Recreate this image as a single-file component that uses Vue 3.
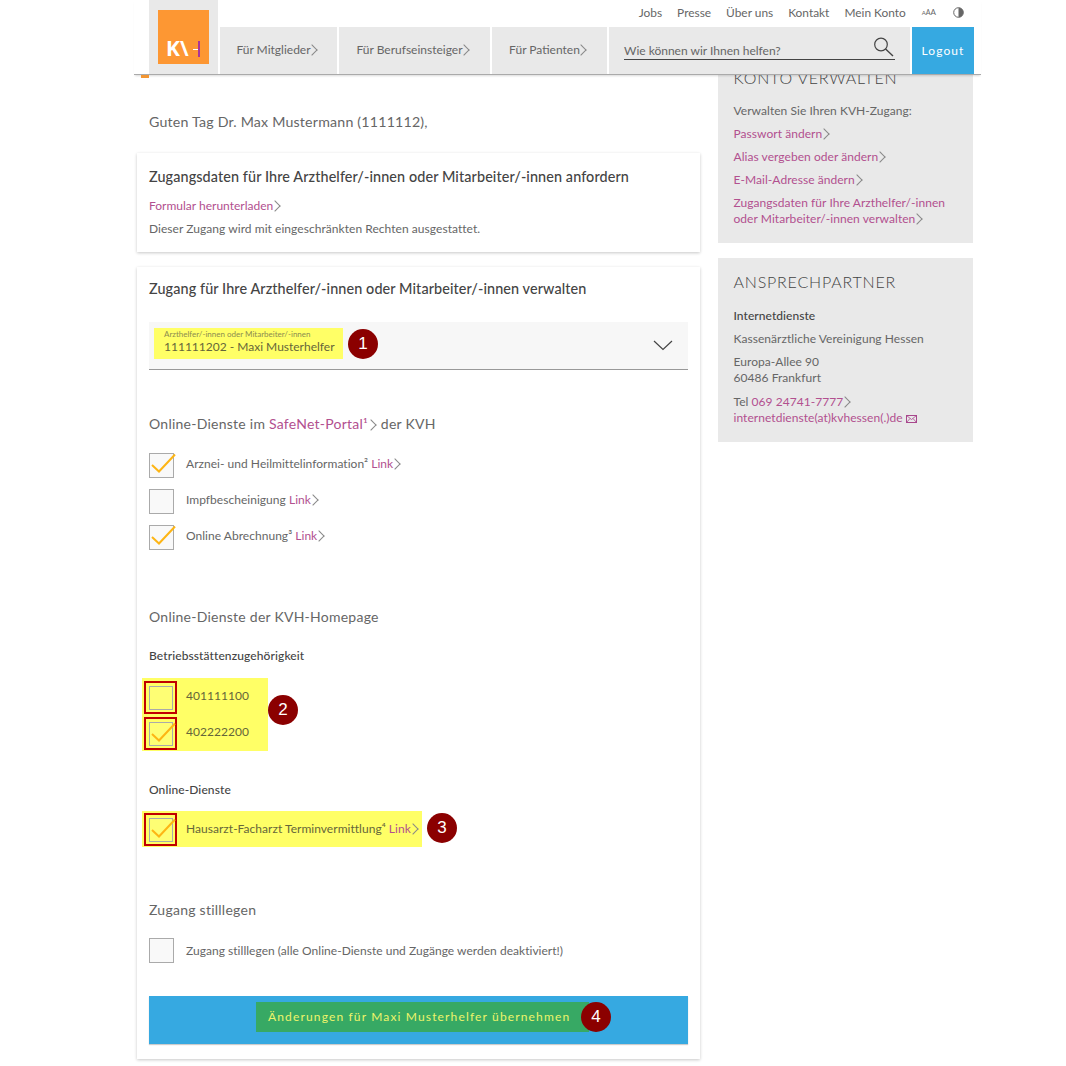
<script setup>
const nav = ['Für Mitglieder', 'Für Berufseinsteiger', 'Für Patienten']
const topLinks = ['Jobs', 'Presse', 'Über uns', 'Kontakt', 'Mein Konto']
const accountLinks = ['Passwort ändern', 'Alias vergeben oder ändern', 'E-Mail-Adresse ändern']
const safenet = [
  { label: 'Arznei- und Heilmittelinformation²', checked: true },
  { label: 'Impfbescheinigung', checked: false },
  { label: 'Online Abrechnung³', checked: true }
]
</script>

<template>
  <div class="page">
    <header class="header">
      <div class="logo-wrap">
        <div class="logo">
          <span class="logo-text">K\</span>
          <span class="logo-dash"></span>
          <span class="logo-bar"></span>
        </div>
      </div>
      <div class="header-right">
        <div class="toplinks">
          <a v-for="t in topLinks" :key="t">{{ t }}</a>
          <span class="aaa"><small>A</small><small class="m">A</small><small class="l">A</small></span>
          <svg class="contrast" width="11" height="11" viewBox="0 0 11 11"><circle cx="5.5" cy="5.5" r="4.8" fill="#fff" stroke="#666" stroke-width="1"/><path d="M5.5 .7a4.8 4.8 0 0 1 0 9.6z" fill="#666"/></svg>
        </div>
        <nav class="mainnav">
          <a v-for="n in nav" :key="n" class="navitem">{{ n }}<i class="chev"></i></a>
          <div class="search">
            <div class="search-field">
              <span>Wie können wir Ihnen helfen?</span>
              <svg width="21" height="20" viewBox="0 0 21 20"><circle cx="8" cy="7.5" r="6.3" fill="none" stroke="#444" stroke-width="1.2"/><path d="M12.6 12l7.4 7" stroke="#444" stroke-width="1.4" fill="none"/></svg>
            </div>
          </div>
          <a class="logout">Logout</a>
        </nav>
      </div>
    </header>
    <span class="marker"></span>

    <div class="columns">
      <main class="left">
        <p class="greet">Guten Tag Dr. Max Mustermann (1111112),</p>

        <section class="card card-a">
          <h2>Zugangsdaten für Ihre Arzthelfer/-innen oder Mitarbeiter/-innen anfordern</h2>
          <p class="dl"><a class="pink">Formular herunterladen<i class="chev"></i></a></p>
          <p class="small">Dieser Zugang wird mit eingeschränkten Rechten ausgestattet.</p>
        </section>

        <section class="card card-b">
          <h2>Zugang für Ihre Arzthelfer/-innen oder Mitarbeiter/-innen verwalten</h2>

          <div class="select">
            <div class="sel-hl">
              <span class="sel-label">Arzthelfer/-innen oder Mitarbeiter/-innen</span>
              <span class="sel-value">111111202 - Maxi Musterhelfer</span>
            </div>
            <span class="badge b1">1</span>
            <svg class="sel-arrow" width="20" height="11" viewBox="0 0 20 11"><path d="M1 1l9 8.5L19 1" fill="none" stroke="#444" stroke-width="1.2"/></svg>
          </div>

          <h3 class="sec sec1">Online-Dienste im <a class="pink">SafeNet-Portal¹<i class="chev big"></i></a> der KVH</h3>
          <div class="group">
            <div v-for="s in safenet" :key="s.label" class="row">
              <span class="box">
                <svg v-if="s.checked" class="tick" width="28" height="24" viewBox="0 0 28 24"><path d="M3 12l7 6.5L26 1.5" fill="none" stroke="#fdb515" stroke-width="2"/></svg>
              </span>
              <span class="lbl">{{ s.label }} <a class="pink">Link<i class="chev"></i></a></span>
            </div>
          </div>

          <h3 class="sec sec2">Online-Dienste der KVH-Homepage</h3>
          <h4 class="sub sub1">Betriebsstättenzugehörigkeit</h4>
          <div class="hl-wrap">
            <div class="hl hl-two">
              <div class="row redrow">
                <span class="red"><span class="box"></span></span>
                <span class="lbl">401111100</span>
              </div>
              <div class="row redrow">
                <span class="red"><span class="box"><svg class="tick" width="28" height="24" viewBox="0 0 28 24"><path d="M3 12l7 6.5L26 1.5" fill="none" stroke="#fdb515" stroke-width="2"/></svg></span></span>
                <span class="lbl">402222200</span>
              </div>
            </div>
            <span class="badge">2</span>
          </div>

          <h4 class="sub sub2">Online-Dienste</h4>
          <div class="hl-wrap">
            <div class="hl hl-one">
              <div class="row redrow">
                <span class="red"><span class="box"><svg class="tick" width="28" height="24" viewBox="0 0 28 24"><path d="M3 12l7 6.5L26 1.5" fill="none" stroke="#fdb515" stroke-width="2"/></svg></span></span>
                <span class="lbl">Hausarzt-Facharzt Terminvermittlung⁴ <a class="pink">Link<i class="chev"></i></a></span>
              </div>
            </div>
            <span class="badge">3</span>
          </div>

          <h3 class="sec sec3">Zugang stilllegen</h3>
          <div class="row stop">
            <span class="box"></span>
            <span class="lbl">Zugang stilllegen (alle Online-Dienste und Zugänge werden deaktiviert!)</span>
          </div>

          <div class="submit">
            <span class="submit-hl">Änderungen für Maxi Musterhelfer übernehmen</span>
            <span class="badge b4">4</span>
          </div>
        </section>
      </main>

      <aside class="right">
        <div class="panel p1">
          <h3>Konto verwalten</h3>
          <p>Verwalten Sie Ihren KVH-Zugang:</p>
          <p v-for="l in accountLinks" :key="l"><a class="pink">{{ l }}<i class="chev"></i></a></p>
          <p><a class="pink">Zugangsdaten für Ihre Arzthelfer/-innen<br>oder Mitarbeiter/-innen verwalten<i class="chev"></i></a></p>
        </div>
        <div class="panel p2">
          <h3>Ansprechpartner</h3>
          <p class="strong">Internetdienste</p>
          <p>Kassenärztliche Vereinigung Hessen</p>
          <p>Europa-Allee 90<br>60486 Frankfurt</p>
          <p class="contact">Tel <a class="pink">069 24741-7777<i class="chev"></i></a><br>
            <a class="pink">internetdienste(at)kvhessen(.)de</a>
            <svg class="mail" width="11" height="8" viewBox="0 0 11 8"><rect x=".5" y=".5" width="10" height="7" fill="none" stroke="#a8478d"/><path d="M.5.5l5 4 5-4M.5 7.5l3.500-4M10.500 7.500l-3.500-4" fill="none" stroke="#a8478d" stroke-width=".8"/></svg>
          </p>
        </div>
      </aside>
    </div>
  </div>
</template>

<style>
html, body { margin: 0; background: #fff; }
</style>

<style scoped>
.page {
  position: relative;
  width: 1066px;
  height: 1066px;
  overflow: hidden;
  background: #fff;
  font-family: "Lato", "Noto Sans", sans-serif;
  color: #666;
  font-size: 12px;
}
a { color: inherit; text-decoration: none; }
p, h2, h3, h4 { margin: 0; font-weight: 400; }
.pink { color: #b2508f; }
.chev {
  display: inline-block;
  width: 8px;
  height: 8px;
  margin: 0 2px 0 -2px;
  box-sizing: border-box;
  border-top: 1px solid #888;
  border-right: 1px solid #888;
  transform: rotate(45deg);
}
.chev.big { margin-left: -1px; }

/* header overlay */
.header {
  position: absolute;
  top: 0;
  left: 134px;
  width: 847px;
  height: 75px;
  padding-left: 15px;
  box-sizing: border-box;
  display: flex;
  background: #fff;
  border-bottom: 1px solid #aaa;
  box-shadow: 0 2px 2px -1px rgba(0, 0, 0, .15);
  z-index: 5;
}
.logo-wrap {
  width: 69px;
  height: 74px;
  background: #e9e9e9;
  padding: 10px 9px 0;
  box-sizing: border-box;
}
.logo {
  position: relative;
  width: 51px;
  height: 54px;
  background: #fd9733;
}
.logo-text {
  position: absolute;
  left: 8px;
  top: 25px;
  font-size: 21px;
  line-height: 26px;
  font-weight: 700;
  color: #fff;
  font-family: "Open Sans", sans-serif;
}
.logo-dash { position: absolute; left: 35px; top: 39px; width: 5px; height: 1px; background: #fff; }
.logo-bar { position: absolute; left: 40px; top: 31px; width: 2px; height: 16px; background: #a8359a; }
.header-right { margin-left: 2px; width: 754px; }
.toplinks {
  height: 24px;
  margin-bottom: 3px;
  display: flex;
  align-items: center;
  justify-content: flex-end;
  gap: 15px;
  padding-right: 10px;
  box-sizing: border-box;
  font-size: 11.9px;
  color: #666;
}
.aaa { display: inline-flex; align-items: baseline; gap: 0; margin: 0 2px 0 1px; }
.aaa small { font-size: 6px; }
.aaa .m { font-size: 7px; }
.aaa .l { font-size: 8px; }
.mainnav { display: flex; gap: 2px; height: 47px; }
.navitem {
  background: #e9e9e9;
  display: flex;
  align-items: center;
  justify-content: center;
  padding: 0 5px 2px 0;
  box-sizing: border-box;
  font-size: 12px;
  color: #666;
}
.navitem .chev { margin: 0 0 0 -3px; }
.navitem:nth-child(1) { width: 117px; }
.navitem:nth-child(2) { width: 151px; }
.navitem:nth-child(3) { width: 115px; }
.search {
  width: 301px;
  background: #e9e9e9;
  padding: 0 15px;
  box-sizing: border-box;
}
.search-field {
  margin-top: 11px;
  height: 21px;
  border-bottom: 1px solid #444;
  display: flex;
  justify-content: space-between;
  align-items: center;
  font-size: 12px;
  color: #666;
}
.search-field span { padding-top: 4px; }
.search-field svg { margin: -4px 1px 0 0; }
.logout {
  width: 62px;
  background: #36a9e1;
  color: #fff;
  display: flex;
  align-items: center;
  justify-content: center;
  font-size: 12px;
  letter-spacing: 1.1px;
}
.marker { position: absolute; left: 141px; top: 75px; width: 8px; height: 3px; background: #f39633; z-index: 6; }

/* columns */
.columns {
  display: flex;
  gap: 18px;
  padding-left: 137px;
  align-items: flex-start;
}
.left { width: 563px; }
.greet {
  padding: 113px 0 0 12px;
  height: 40px;
  font-size: 14.2px;
  line-height: 17px;
  color: #666;
  letter-spacing: .2px;
}
.card {
  background: #fff;
  box-shadow: 0 1px 3px rgba(0, 0, 0, .22);
  padding: 0 12px;
  box-sizing: border-box;
}
.card h2 {
  font-size: 14.4px;
  line-height: 18px;
  color: #444;
  font-weight: 500;
  letter-spacing: .1px;
}
.card-a { height: 99px; padding-top: 15px; }
.dl { margin-top: 13px; font-size: 12px; line-height: 14px; }
.small { margin-top: 9px; font-size: 12px; line-height: 14px; letter-spacing: .05px; }
.card-b { margin-top: 15px; height: 792px; padding-top: 13px; }
.select {
  margin-top: 24px;
  height: 48px;
  background: #f7f7f7;
  border-bottom: 1px solid #999;
  padding: 6px 0 0 5px;
  box-sizing: border-box;
  display: flex;
  align-items: flex-start;
  position: relative;
}
.sel-hl {
  width: 189px;
  height: 31px;
  background: #ffff66;
  padding: 2px 0 0 10px;
  box-sizing: border-box;
  display: flex;
  flex-direction: column;
  white-space: nowrap;
}
.sel-label { font-size: 8px; line-height: 8px; color: #8c8c50; }
.sel-value { font-size: 12px; line-height: 15px; margin-top: 1px; color: #66663a; }
.badge {
  width: 30px;
  height: 30px;
  border-radius: 50%;
  background: #8b0000;
  color: #fff;
  font: 400 17px/30px "Liberation Sans", sans-serif;
  text-align: center;
  flex: none;
}
.b1 { margin: 1px 0 0 5px; }
.sel-arrow { position: absolute; right: 15px; top: 18px; }
.sec { font-size: 14px; line-height: 18px; color: #666; letter-spacing: .25px; }
.sec1 { margin-top: 45px; }
.group { margin-top: 20px; display: flex; flex-direction: column; gap: 12px; }
.row { display: flex; align-items: center; height: 24px; }
.box {
  position: relative;
  width: 25px;
  height: 25px;
  box-sizing: border-box;
  border: 1px solid #aaa;
  background: rgba(245, 245, 245, .6);
  flex: none;
}
.tick { position: absolute; left: -1px; top: -1px; }
.lbl { margin-left: 12px; padding-bottom: 4px; font-size: 12px; color: #666; white-space: nowrap; letter-spacing: .03px; }
.sec2 { margin-top: 59px; }
.sub { font-size: 12px; line-height: 14px; font-weight: 500; color: #444; letter-spacing: .1px; }
.sub1 { margin-top: 23px; }
.hl-wrap { display: flex; align-items: flex-start; margin-left: -7px; }
.hl { background: #ffff66; padding: 2px 0 0 2px; box-sizing: border-box; }
.hl-two { margin-top: 15px; width: 126px; height: 73px; display: flex; flex-direction: column; gap: 3px; padding-top: 3px; }
.hl-two + .badge { margin-top: 32px; }
.hl-one { margin-top: 14px; width: 280px; height: 36px; }
.hl-one + .badge { margin: 16px 0 0 5px; }
.hl-one .lbl { padding-bottom: 2px; }
.redrow { height: 33px; }
.red {
  width: 33px;
  height: 33px;
  border: 2px solid #c00000;
  box-sizing: border-box;
  display: flex;
  align-items: center;
  justify-content: center;
  flex: none;
}
.redrow .box { width: 24px; height: 24px; background: rgba(245, 245, 245, .1); }
.redrow .lbl { margin-left: 9px; color: #66663a; }
.sub2 { margin-top: 32px; }
.sec3 { margin-top: 54px; }
.stop { margin-top: 19px; height: 25px; }
.stop .lbl { padding-bottom: 0; }
.submit {
  margin-top: 33px;
  height: 48px;
  background: #36a9e1;
  box-shadow: 0 1px 1px rgba(0, 0, 0, .2);
  position: relative;
  padding: 6px 0 0 107px;
  box-sizing: border-box;
  display: flex;
  align-items: flex-start;
}
.submit-hl {
  width: 333px;
  height: 30px;
  padding-left: 12px;
  box-sizing: border-box;
  background: #37a964;
  color: #eef46a;
  font-size: 12px;
  line-height: 30px;
  letter-spacing: 1.15px;
  white-space: nowrap;
}
.b4 { margin-left: -8px; }

/* sidebar */
.right { width: 255px; padding-top: 61px; }
.panel { background: #e9e9e9; padding: 0 15px 0 15.5px; box-sizing: border-box; }
.panel h3 { font-size: 16px; line-height: 20px; text-transform: uppercase; color: #444; letter-spacing: .8px; font-weight: 300; }
.panel p { font-size: 12px; line-height: 16px; margin-top: 7px; color: #666; letter-spacing: .05px; }
.panel p.strong { color: #444; font-weight: 500; }
.panel p.contact { margin-top: 8px; }
.p1 { height: 182px; padding-top: 7px; }
.p1 h3 + p { margin-top: 15px; }
.p2 { height: 184px; margin-top: 15px; padding-top: 14px; }
.p2 h3 + p { margin-top: 16px; }
.mail { vertical-align: -1px; margin-left: 3px; }
</style>
